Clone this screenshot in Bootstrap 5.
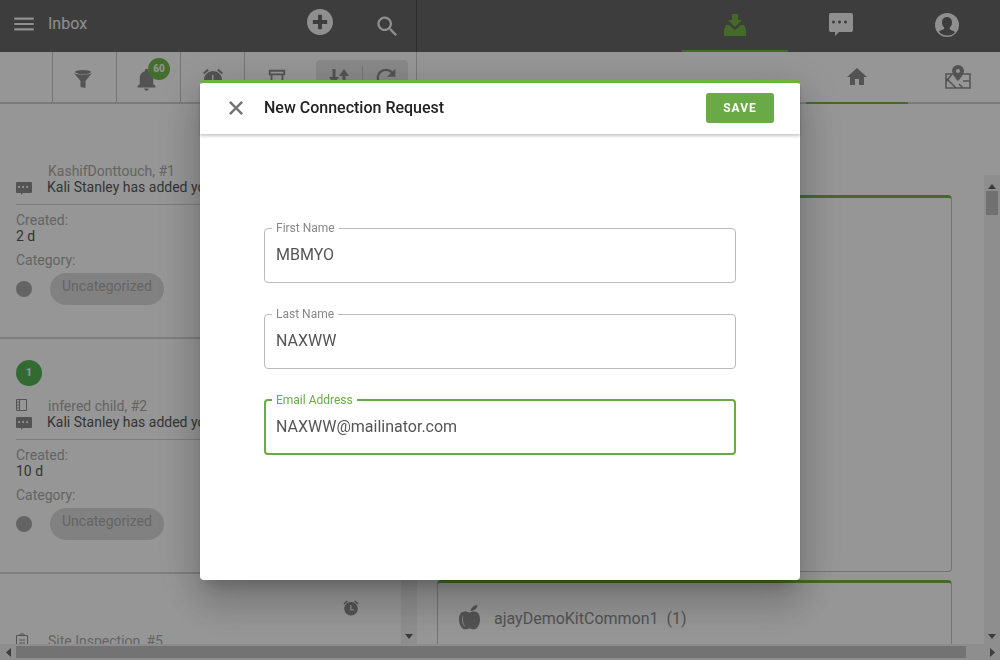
<!DOCTYPE html>
<html lang="en">
<head>
<meta charset="utf-8">
<title>Inbox</title>
<link href="https://cdn.jsdelivr.net/npm/bootstrap@5.3.0/dist/css/bootstrap.min.css" rel="stylesheet">
<style>
html,body{height:100%;overflow:hidden}
body{font-family:Roboto,"Liberation Sans",sans-serif;font-size:14px;line-height:16px;color:#5a5a5a;background:#fff}
svg{display:block;fill:currentColor;flex:none}
.app-frame{height:660px;width:1000px}
.top-bar{height:52px;background:#696969;color:#f4f4f4;flex:none}
.top-left{width:417px;flex:none;border-right:1px solid #4d4d4d;padding-left:11px}
.top-title{font-size:16px;margin-left:11px;width:259px;flex:none}
.top-spacer{width:41px;flex:none}
.top-right{padding-left:265px}
.top-tab{width:106px;height:52px;border-bottom:2px solid transparent;flex:none}
.top-tab.is-on{border-bottom-color:#72b743;color:#72b743}
.sub-bar{height:52px;background:#fff;box-shadow:inset 0 -2px 0 #d0d0d0;flex:none;color:#8e8e8e;overflow:hidden}
.sub-left{width:417px;flex:none;border-right:1px solid #ccc;padding-left:52px}
.sub-cell{width:64px;height:50px;border-left:1px solid #c6c6c6;position:relative;flex:none}
.sub-cell:nth-child(4){width:72px}
.sub-group{width:92px;height:42px;margin-top:8px;background:#e8e8e8;border-radius:4px;padding-top:6px;flex:none}
.sub-group>span{width:46px;height:28px}
.sub-group>span+span{border-left:1px solid #c9c9c9}
.refresh-ico{margin-top:-2px}
.count-dot{position:absolute;left:31px;top:6px;width:22px;height:22px;border-radius:50%;background:#74bb4f;color:#fff;font-size:10px;font-weight:700;line-height:22px;text-align:center}
.sub-right{padding-left:389px;flex:none}
.sub-tab{width:102px;height:52px;border-bottom:2px solid transparent;flex:none}
.sub-tab.is-on{border-bottom-color:#72b743}
.sub-tab-b{width:104px}
.main-area{min-height:0}
.left-pane{width:417px;flex:none}
.list-scroll{flex:1 1 auto;min-width:0;overflow:hidden}
.entry{height:235px;padding:21px 15px 0 16px;border-bottom:2px solid #d6d6d6;white-space:nowrap;overflow:hidden}
.entry-top{height:26px;margin-bottom:12px}
.step-dot{width:26px;height:26px;border-radius:50%;background:#58b558;color:#fff;font-size:11px;font-weight:700;line-height:26px;text-align:center}
.entry-alarm{color:#8e8e8e;margin-right:26px}
.entry-line{height:16px}
.entry-ico{width:32px;flex:none;color:#8e8e8e}
.entry-name{color:#aaa}
.entry-msg{margin-left:-1px}
.entry-rule{border-bottom:1px solid #d6d6d6;height:10px;margin-bottom:7px}
.muted-label{color:#aaa}
.value-line{margin-bottom:8px}
.cat-row{margin-top:5px}
.cat-dot{width:16px;height:16px;border-radius:50%;background:#aaa;margin:8px 18px 0 0;flex:none}
.cat-pill{height:32px;padding:5px 12px 0;border-radius:16px;background:#dcdcdc;color:#aaa}
.scroll-y{width:16px;flex:none;background:#f1f1f1;color:#666;padding:5px 2px}
.thumb-y{height:24px;background:#c1c1c1;margin-top:2px}
.right-pane{min-width:0}
.panel-col{padding:91px 32px 0 20px;overflow:hidden}
.panel-box{border:1px solid #c6c6c6;border-top:3px solid #72b743;border-radius:4px}
.panel-one{height:377px;margin-bottom:8px}
.panel-two{height:120px;padding:20px 20px 0 21px;font-size:16px;line-height:20px;color:#8e8e8e;white-space:pre}
.panel-two svg{margin-right:14px}
.panel-label{margin-top:6px}
.right-scroll{margin-top:71px}
.scroll-x{height:16px;flex:none;background:#f1f1f1;color:#666;padding:2px 0}
.scroll-x-end{width:16px;flex:none}
.thumb-x{height:12px;background:#c4c4c4}
.scroll-x-gap{width:18px;flex:none}
.modal-backdrop{--bs-backdrop-opacity:.41}
.conn-modal{--bs-modal-width:600px;--bs-modal-margin:0}
.conn-modal .modal-dialog{margin:80px auto 0;width:600px}
.conn-content{height:500px;border:0;border-top:3px solid #6cb33f;border-radius:4px;box-shadow:0 11px 15px -7px rgba(0,0,0,.2),0 24px 38px 3px rgba(0,0,0,.14),0 9px 46px 8px rgba(0,0,0,.12)}
.conn-head{height:51px;padding:0 26px 2px 29px;border:0;box-shadow:0 2px 3px rgba(0,0,0,.22);border-radius:0;flex:none}
.conn-close{width:14px;height:14px;padding:0;border:0;background:none;color:#777;margin-right:21px}
.conn-title{font-size:16px;font-weight:500;line-height:20px;color:#222;margin:0}
.conn-save{width:68px;height:30px;padding:0;background:#69aa46;border:0;border-radius:3px;color:#fff;font-size:12px;font-weight:700;letter-spacing:1px;line-height:30px}
.conn-body{padding:87px 64px 0;gap:24px}
.float-box{border:1px solid #bbb;border-radius:4px;height:62px}
.float-box legend{float:none;width:auto;margin:0 0 0 7px;padding:0 4px;font-size:12px;line-height:14px;color:#888}
.float-input{height:38px;padding:0 11px;border:0;border-radius:0;font-size:16px;color:#555;background:transparent;box-shadow:none}
.float-input:focus{box-shadow:none;color:#555;background:transparent}
.float-box.is-active{border:2px solid #69aa46}
.float-box.is-active legend{color:#69aa46;margin-left:6px}
.float-box.is-active .float-input{padding:0 10px}
</style>
</head>
<body>
<div class="app-frame d-flex flex-column overflow-hidden">
  <header class="top-bar d-flex">
    <div class="top-left d-flex align-items-center">
      <svg width="26" height="26" viewBox="0 0 24 24" class="mb-1"><path d="M3 18h18v-2H3v2zm0-5h18v-2H3v2zm0-7v2h18V6H3z"/></svg>
      <span class="top-title mb-1">Inbox</span>
      <svg width="26" height="26" viewBox="2 2 20 20" class="mb-2"><path d="M12 2C6.480 2 2 6.480 2 12s4.480 10 10 10 10-4.480 10-10S17.520 2 12 2zm5.500 11.500h-4v4h-3v-4h-4v-3h4v-4h3v4h4v3z"/></svg>
      <span class="top-spacer"></span>
      <svg width="27" height="27" viewBox="0 0 24 24"><path d="M15.500 14h-.79l-.28-.27C15.410 12.590 16 11.110 16 9.500 16 5.910 13.090 3 9.500 3S3 5.910 3 9.500 5.910 16 9.500 16c1.610 0 3.090-.59 4.230-1.570l.27.28v.79l5 4.990L20.490 19l-4.990-5zm-6 0C7.010 14 5 11.990 5 9.500S7.010 5 9.500 5 14 7.010 14 9.500 11.990 14 9.500 14z"/></svg>
    </div>
    <nav class="top-right d-flex">
      <span class="top-tab is-on d-flex align-items-center justify-content-center">
        <svg width="22" height="22" viewBox="0 0 22 22"><path d="M8 0h6v6h4l-7 7-7-7h4z"/><path d="M2 11h3l6 5 6-5h3l2 5v6H0v-6z"/></svg>
      </span>
      <span class="top-tab d-flex align-items-center justify-content-center">
        <svg width="26" height="26" viewBox="0 0 26 26"><path d="M3 2h20a2 2 0 0 1 2 2v15a2 2 0 0 1-2 2H11l-4 4v-4H3a2 2 0 0 1-2-2V4a2 2 0 0 1 2-2zm4 9a1.500 1.500 0 1 0 0 .01zm6 0a1.500 1.500 0 1 0 0 .01zm6 0a1.500 1.500 0 1 0 0 .01z" fill-rule="evenodd" transform="translate(0 -1)"/></svg>
      </span>
      <span class="top-tab d-flex align-items-center justify-content-center">
        <svg width="26" height="26" viewBox="0 0 26 26"><path fill-rule="evenodd" d="M13 1a12 12 0 1 0 0 24 12 12 0 0 0 0-24zm0 4c3 0 5 2.200 5 5.500 0 2.200-.9 4-2.200 5v1.500c0 1 3.500 1.500 5.200 3.200A10.300 10.300 0 0 1 13 23.500a10.300 10.300 0 0 1-8-3.800C6.700 18 10.200 17.500 10.200 16.500V15.500C8.900 14.500 8 12.700 8 10.500 8 7.200 10 5 13 5z"/></svg>
      </span>
    </nav>
  </header>

  <div class="sub-bar d-flex">
    <div class="sub-left d-flex">
      <span class="sub-cell d-flex align-items-center justify-content-center">
        <svg width="20" height="20" viewBox="0 0 20 20" class="mt-1 me-1"><ellipse cx="10" cy="3" rx="8" ry="2"/><path d="M1 4c3 2 15 2 18 0l-6.500 8v7l-5-1v-6z"/></svg>
      </span>
      <span class="sub-cell d-flex align-items-center justify-content-center">
        <svg width="27" height="27" viewBox="0 0 24 24" class="mt-1 me-1"><path d="M12 22c1.100 0 2-.9 2-2h-4c0 1.100.9 2 2 2zm6-6v-5c0-3.070-1.630-5.640-4.500-6.320V4c0-.83-.67-1.500-1.500-1.500s-1.500.67-1.500 1.500v.68C7.640 5.360 6 7.920 6 11v5l-2 2v1h16v-1l-2-2z"/></svg>
        <span class="count-dot">60</span>
      </span>
      <span class="sub-cell d-flex align-items-center justify-content-center">
        <svg width="24" height="24" viewBox="0 0 24 24" class="mt-1"><path fill-rule="evenodd" d="M22 5.720l-4.600-3.860-1.290 1.530 4.600 3.860L22 5.720zM7.880 3.390L6.600 1.860 2 5.710l1.290 1.530 4.590-3.850zM12 4c-4.970 0-9 4.030-9 9s4.020 9 9 9c4.970 0 9-4.030 9-9s-4.030-9-9-9zM11 8h1.500v5.500H16V15h-5z"/></svg>
      </span>
      <span class="sub-cell d-flex justify-content-center">
        <svg width="20" height="20" viewBox="0 0 22 22" class="mt-3 me-2"><path d="M2 2h18v6h-2v12H4V8H2zm2 2v2h14V4zm2 4v10h10V8z" fill-rule="evenodd"/></svg>
      </span>
      <div class="sub-group d-flex">
        <span class="d-flex justify-content-center">
          <svg width="24" height="24" viewBox="0 0 24 24"><path d="M5.500 3h3v8H12l-5 7-5-7h3.500zM17 3l5 7h-3.500v10h-3V10H12z"/></svg>
        </span>
        <span class="d-flex justify-content-center">
          <svg width="28" height="28" viewBox="0 0 24 24" class="refresh-ico"><path d="M17.650 6.350C16.200 4.900 14.210 4 12 4c-4.420 0-7.990 3.580-7.990 8s3.570 8 7.990 8c3.730 0 6.840-2.550 7.730-6h-2.080c-.82 2.330-3.040 4-5.650 4-3.310 0-6-2.690-6-6s2.690-6 6-6c1.660 0 3.140.69 4.220 1.780L13 11h7V4l-2.350 2.350z"/></svg>
        </span>
      </div>
    </div>
    <nav class="sub-right d-flex">
      <span class="sub-tab is-on d-flex align-items-center justify-content-center">
        <svg width="24" height="24" viewBox="0 0 24 24"><path d="M10 20v-6h4v6h5v-8h3L12 3 2 12h3v8z"/></svg>
      </span>
      <span class="sub-tab sub-tab-b d-flex align-items-center justify-content-center">
        <svg width="26" height="26" viewBox="0 0 26 26" class="me-1"><path fill-rule="evenodd" d="M13 1a6 6 0 0 0-6 6c0 4 6 10 6 10s6-6 6-10a6 6 0 0 0-6-6zm0 4a2 2 0 1 1 0 4 2 2 0 0 1 0-4z"/><path fill="none" stroke="currentColor" stroke-width="1.500" d="M8 10H1v14h24V10h-7M1 14l10 10M7 10l-6 8M18 17h7M14 20l4 4"/></svg>
      </span>
    </nav>
  </div>

  <main class="main-area d-flex flex-grow-1">
    <section class="left-pane d-flex">
      <div class="list-scroll">
        <article class="entry">
          <div class="entry-top d-flex justify-content-between"></div>
          <div class="entry-line d-flex"><span class="entry-ico"></span><span class="entry-name">KashifDonttouch, #1</span></div>
          <div class="entry-line d-flex"><span class="entry-ico"><svg width="16" height="16" viewBox="0 0 16 16"><path fill-rule="evenodd" d="M1 3h14a1 1 0 0 1 1 1v9a1 1 0 0 1-1 1H7l-2 2v-2H1a1 1 0 0 1-1-1V4a1 1 0 0 1 1-1zm3 5a1 1 0 1 0 0 .01zm4 0a1 1 0 1 0 0 .01zm4 0a1 1 0 1 0 0 .01z"/></svg></span><span class="entry-msg">Kali Stanley has added you to a connection</span></div>
          <div class="entry-rule"></div>
          <div class="muted-label">Created:</div>
          <div class="value-line">2 d</div>
          <div class="muted-label">Category:</div>
          <div class="cat-row d-flex"><span class="cat-dot"></span><span class="cat-pill">Uncategorized</span></div>
        </article>
        <article class="entry">
          <div class="entry-top d-flex justify-content-between"><span class="step-dot">1</span></div>
          <div class="entry-line d-flex"><span class="entry-ico"><svg width="11" height="14" viewBox="0 0 11 14"><path fill="none" stroke="currentColor" d="M.5 1.500h10v11H.5zM3.500 1.500v11M0 4h3M0 7h3M0 10h3"/></svg></span><span class="entry-name">infered child, #2</span></div>
          <div class="entry-line d-flex"><span class="entry-ico"><svg width="16" height="16" viewBox="0 0 16 16"><path fill-rule="evenodd" d="M1 3h14a1 1 0 0 1 1 1v9a1 1 0 0 1-1 1H7l-2 2v-2H1a1 1 0 0 1-1-1V4a1 1 0 0 1 1-1zm3 5a1 1 0 1 0 0 .01zm4 0a1 1 0 1 0 0 .01zm4 0a1 1 0 1 0 0 .01z"/></svg></span><span class="entry-msg">Kali Stanley has added you to a connection</span></div>
          <div class="entry-rule"></div>
          <div class="muted-label">Created:</div>
          <div class="value-line">10 d</div>
          <div class="muted-label">Category:</div>
          <div class="cat-row d-flex"><span class="cat-dot"></span><span class="cat-pill">Uncategorized</span></div>
        </article>
        <article class="entry">
          <div class="entry-top d-flex justify-content-end align-items-center">
            <svg width="18" height="18" viewBox="0 0 24 24" class="entry-alarm"><path fill-rule="evenodd" d="M22 5.720l-4.600-3.860-1.290 1.530 4.600 3.860L22 5.720zM7.880 3.390L6.600 1.860 2 5.710l1.290 1.530 4.590-3.850zM12 4c-4.970 0-9 4.030-9 9s4.020 9 9 9c4.970 0 9-4.030 9-9s-4.030-9-9-9zM11 8h1.500v5.500H16V15h-5z"/></svg>
          </div>
          <div class="entry-line d-flex"><span class="entry-ico"><svg width="12" height="16" viewBox="0 0 12 16"><path fill="none" stroke="currentColor" d="M.5 2.500h11v13H.5zM4 2.500V1h4v1.500M3 7h6M3 10h6M3 13h6"/></svg></span><span class="entry-name">Site Inspection, #5</span></div>
        </article>
      </div>
      <div class="scroll-y d-flex flex-column justify-content-end align-items-center">
        <svg width="8" height="5" viewBox="0 0 8 5"><path d="M0 0h8L4 5z"/></svg>
      </div>
    </section>

    <section class="right-pane d-flex flex-grow-1">
      <div class="panel-col flex-grow-1">
        <div class="panel-box panel-one"></div>
        <div class="panel-box panel-two d-flex align-items-start">
          <svg width="21" height="28" viewBox="0 0 24 30"><path d="M13 8c1-4 4-6 8-7 0 4-3 7-8 7z"/><path d="M12 10c-2-1-4-2-7-1C1 10 0 14 0 18c0 5 3 11 7 11 2 0 3-1 5-1s3 1 5 1c4 0 7-6 7-11 0-4-1-8-5-9-3-1-5 0-7 1zM5 13c-1 4-1 9 2 13-3-2-5-9-2-13z" fill-rule="evenodd"/></svg>
          <span class="panel-label">ajayDemoKitCommon1  (1)</span>
        </div>
      </div>
      <div class="scroll-y right-scroll d-flex flex-column align-items-stretch">
        <svg width="12" height="5" viewBox="0 0 12 5" class="mt-1"><path d="M2 5h8L6 0z"/></svg>
        <div class="thumb-y"></div>
        <div class="flex-grow-1"></div>
        <svg width="12" height="5" viewBox="0 0 12 5"><path d="M2 0h8L6 5z"/></svg>
      </div>
    </section>
  </main>

  <div class="scroll-x d-flex align-items-center">
    <span class="scroll-x-end d-flex justify-content-center"><svg width="5" height="9" viewBox="0 0 5 9"><path d="M5 0v9L0 4.500z"/></svg></span>
    <div class="thumb-x flex-grow-1"></div>
    <span class="scroll-x-gap"></span>
    <span class="scroll-x-end d-flex justify-content-center"><svg width="5" height="9" viewBox="0 0 5 9"><path d="M0 0v9l5-4.500z"/></svg></span>
  </div>
</div>

<div class="modal-backdrop show"></div>
<div class="modal conn-modal d-block" tabindex="-1" role="dialog" aria-modal="true">
  <div class="modal-dialog">
    <div class="modal-content conn-content">
      <div class="modal-header conn-head d-flex align-items-center">
        <button type="button" class="conn-close" aria-label="Close"><svg width="14" height="14" viewBox="5 5 14 14"><path d="M19 6.800L17.200 5 12 10.200 6.800 5 5 6.800 10.200 12 5 17.200 6.800 19 12 13.800 17.200 19 19 17.200 13.800 12z"/></svg></button>
        <h5 class="conn-title flex-grow-1">New Connection Request</h5>
        <button type="button" class="btn conn-save">SAVE</button>
      </div>
      <form class="modal-body conn-body d-flex flex-column">
        <fieldset class="float-box">
          <legend>First Name</legend>
          <input class="form-control float-input" type="text" value="MBMYO" aria-label="First Name">
        </fieldset>
        <fieldset class="float-box">
          <legend>Last Name</legend>
          <input class="form-control float-input" type="text" value="NAXWW" aria-label="Last Name">
        </fieldset>
        <fieldset class="float-box is-active">
          <legend>Email Address</legend>
          <input class="form-control float-input" type="email" value="NAXWW@mailinator.com" aria-label="Email Address">
        </fieldset>
      </form>
    </div>
  </div>
</div>
<script src="https://cdn.jsdelivr.net/npm/bootstrap@5.3.0/dist/js/bootstrap.bundle.min.js"></script>
</body>
</html>
